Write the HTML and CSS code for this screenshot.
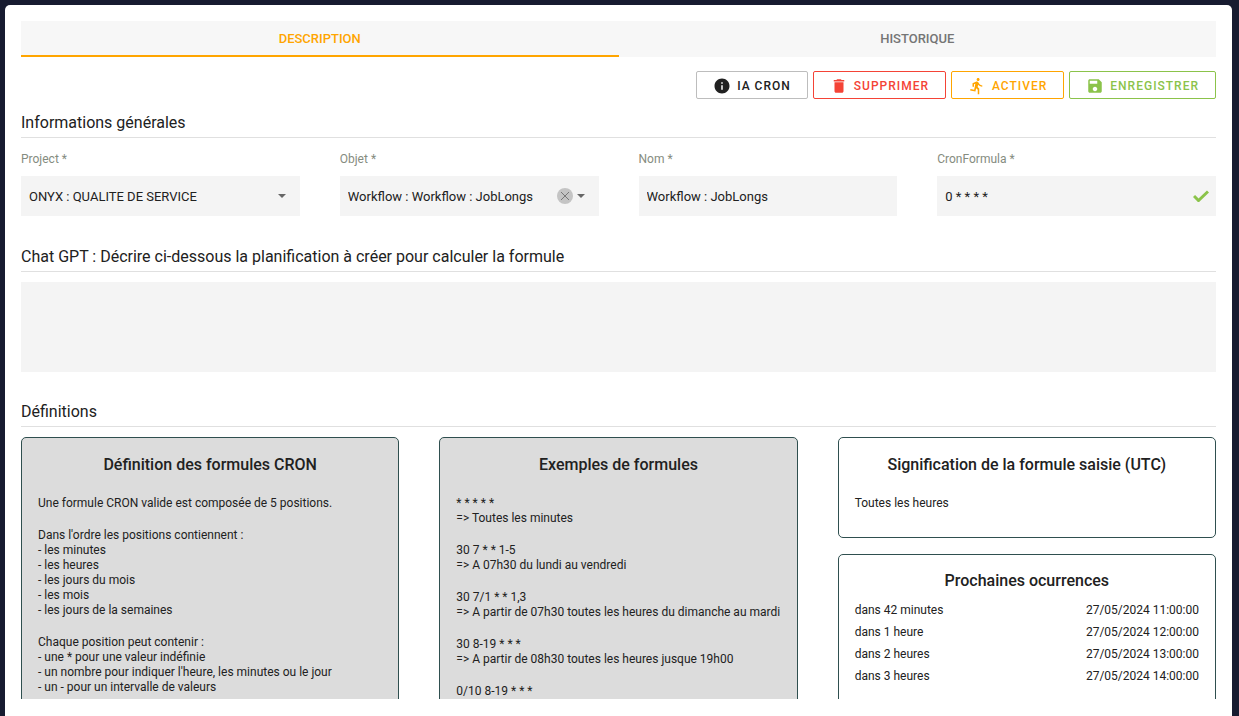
FILE: index.html
```html
<!DOCTYPE html>
<html lang="fr">
<head>
  <meta charset="UTF-8">
  <meta name="viewport" content="width=device-width, initial-scale=1.0">
  <title>Planification CRON</title>
  <link rel="stylesheet" href="styles.css">
</head>
<body>
  <main class="panel">
    <div class="tabs" role="tablist">
      <button class="tab active" role="tab" aria-selected="true">DESCRIPTION</button>
      <button class="tab" role="tab" aria-selected="false">HISTORIQUE</button>
    </div>

    <form class="content">
      <div class="actions">
        <button type="button" class="btn">
          <svg viewBox="0 0 24 24"><path d="M12 2C6.48 2 2 6.48 2 12s4.48 10 10 10 10-4.48 10-10S17.52 2 12 2zm1 15h-2v-6h2v6zm0-8h-2V7h2v2z"/></svg>
          IA CRON
        </button>
        <button type="button" class="btn danger">
          <svg viewBox="0 0 24 24"><path d="M6 19c0 1.1.9 2 2 2h8c1.1 0 2-.9 2-2V7H6v12zM19 4h-3.5l-1-1h-5l-1 1H5v2h14V4z"/></svg>
          SUPPRIMER
        </button>
        <button type="button" class="btn warning">
          <svg viewBox="0 0 24 24"><path d="M13.49 5.48c1.1 0 2-.9 2-2s-.9-2-2-2-2 .9-2 2 .9 2 2 2zm-3.6 13.9l1-4.4 2.1 2v6h2v-7.5l-2.1-2 .6-3c1.3 1.5 3.3 2.5 5.5 2.5v-2c-1.9 0-3.5-1-4.3-2.4l-1-1.6c-.4-.6-1-1-1.7-1-.3 0-.5.1-.8.1l-5.2 2.2v4.7h2v-3.4l1.8-.7-1.6 8.1-4.9-1-.4 2 7 1.4z"/></svg>
          ACTIVER
        </button>
        <button type="submit" class="btn success">
          <svg viewBox="0 0 24 24"><path d="M17 3H5c-1.11 0-2 .9-2 2v14c0 1.1.89 2 2 2h14c1.1 0 2-.9 2-2V7l-4-4zm-5 16c-1.66 0-3-1.34-3-3s1.34-3 3-3 3 1.34 3 3-1.34 3-3 3zm3-10H5V5h10v4z"/></svg>
          ENREGISTRER
        </button>
      </div>

      <h2>Informations générales</h2>
      <div class="row fields">
        <div class="col">
          <label for="project">Project *</label>
          <div class="field">
            <select id="project">
              <option>ONYX : QUALITE DE SERVICE</option>
            </select>
            <svg class="arrow" viewBox="0 0 8 4"><path d="M0 0h8L4 4z"/></svg>
          </div>
        </div>
        <div class="col">
          <label for="objet">Objet *</label>
          <div class="field">
            <select id="objet">
              <option>Workflow : Workflow : JobLongs</option>
            </select>
            <button type="button" class="clear" aria-label="Effacer">
              <svg viewBox="0 0 16 16"><path d="M4 4l8 8M12 4l-8 8"/></svg>
            </button>
            <svg class="arrow" viewBox="0 0 8 4"><path d="M0 0h8L4 4z"/></svg>
          </div>
        </div>
        <div class="col">
          <label for="nom">Nom *</label>
          <div class="field">
            <input type="text" id="nom" value="Workflow : JobLongs">
          </div>
        </div>
        <div class="col">
          <label for="formula">CronFormula *</label>
          <div class="field">
            <input type="text" id="formula" value="0 * * * *">
            <svg class="check" viewBox="0 0 16 12"><path d="M1 6l4.500 4.500L15 1.500"/></svg>
          </div>
        </div>
      </div>

      <h2><label for="prompt">Chat GPT : Décrire ci-dessous la planification à créer pour calculer la formule</label></h2>
      <textarea id="prompt" class="prompt"></textarea>

      <h2>Définitions</h2>
      <div class="row">
        <div class="col">
          <section class="card grey">
            <h3>Définition des formules CRON</h3>
            <div class="text">
              <p>Une formule CRON valide est composée de 5 positions.</p>
              <p>
                Dans l'ordre les positions contiennent :<br>
                - les minutes<br>
                - les heures<br>
                - les jours du mois<br>
                - les mois<br>
                - les jours de la semaines
              </p>
              <p>
                Chaque position peut contenir :<br>
                - une * pour une valeur indéfinie<br>
                - un nombre pour indiquer l'heure, les minutes ou le jour<br>
                - un - pour un intervalle de valeurs
              </p>
            </div>
          </section>
        </div>
        <div class="col">
          <section class="card grey">
            <h3>Exemples de formules</h3>
            <div class="text">
              <p>* * * * *<br>=&gt; Toutes les minutes</p>
              <p>30 7 * * 1-5<br>=&gt; A 07h30 du lundi au vendredi</p>
              <p>30 7/1 * * 1,3<br>=&gt; A partir de 07h30 toutes les heures du dimanche au mardi</p>
              <p>30 8-19 * * *<br>=&gt; A partir de 08h30 toutes les heures jusque 19h00</p>
              <p>0/10 8-19 * * *</p>
            </div>
          </section>
        </div>
        <div class="col">
          <section class="card">
            <h3>Signification de la formule saisie (UTC)</h3>
            <div class="text">
              <p>Toutes les heures</p>
            </div>
          </section>
          <section class="card next">
            <h3>Prochaines ocurrences</h3>
            <table class="dates">
              <tr><td>dans 42 minutes</td><td>27/05/2024 11:00:00</td></tr>
              <tr><td>dans 1 heure</td><td>27/05/2024 12:00:00</td></tr>
              <tr><td>dans 2 heures</td><td>27/05/2024 13:00:00</td></tr>
              <tr><td>dans 3 heures</td><td>27/05/2024 14:00:00</td></tr>
            </table>
          </section>
        </div>
      </div>
    </form>
  </main>
</body>
</html>
```

FILE: styles.css
```css
* {
  box-sizing: border-box;
}
body {
  margin: 0;
  height: 100vh;
  padding: 5px 7px 0 5px;
  background: #171b30;
  font-family: Roboto, "Liberation Sans", sans-serif;
  font-size: 13px;
  color: #212121;
  overflow: hidden;
}
button, input, select, textarea {
  font: inherit;
  color: inherit;
  border: none;
  background: none;
  outline: none;
}
.panel {
  height: 100%;
  padding: 16px 16px 17px;
  display: flex;
  flex-direction: column;
  background: #fff;
  border-radius: 5px 5px 0 0;
}
.tabs {
  display: flex;
  flex: none;
  height: 36px;
  background: #f7f7f7;
}
.tab {
  flex: 1;
  padding: 0;
  border-bottom: 2px solid transparent;
  font-weight: 500;
  color: #757575;
  cursor: pointer;
}
.tab.active {
  color: #ffa500;
  border-bottom-color: #ffa500;
}
.content {
  flex: 1;
  min-height: 0;
  padding-top: 14px;
  overflow: hidden;
}

/* buttons */
.actions {
  display: flex;
  justify-content: flex-end;
  gap: 5px;
  margin-bottom: 12px;
}
.btn {
  display: flex;
  align-items: center;
  gap: 6px;
  height: 28px;
  padding: 2px 16px 0;
  border: 1px solid #bdbdbd;
  border-radius: 2px;
  font-size: 12px;
  font-weight: 500;
  letter-spacing: 1px;
  cursor: pointer;
}
.btn svg {
  width: 18px;
  height: 18px;
  fill: currentColor;
}
.btn.danger {
  color: #f44336;
  border-color: #f44336;
}
.btn.warning {
  color: #ffa500;
  border-color: #ffa500;
}
.btn.success {
  color: #8bc34a;
  border-color: #8bc34a;
}

h2 {
  margin: 0 0 10px;
  padding-bottom: 2px;
  border-bottom: 1px solid #e0e0e0;
  font-size: 16px;
  font-weight: 400;
  line-height: 24px;
}

/* columns */
.row {
  display: grid;
  grid-auto-flow: column;
  grid-auto-columns: minmax(0, 1fr);
}
.col {
  padding: 0 20px;
}
.col:first-child {
  padding-left: 0;
}
.col:last-child {
  padding-right: 0;
}

/* fields */
.fields {
  padding-top: 3px;
  margin-bottom: 29px;
}
.col > label {
  display: block;
  margin-bottom: 9px;
  font-size: 12px;
  line-height: 16px;
  color: #858c80;
}
.field {
  display: flex;
  align-items: center;
  height: 40px;
  padding-right: 14px;
  background: #f4f4f4;
}
.field input, .field select {
  flex: 1;
  min-width: 0;
  height: 100%;
  padding: 0 8px;
  appearance: none;
}
.arrow {
  width: 8px;
  height: 4px;
  fill: #666;
}
.clear {
  width: 16px;
  height: 16px;
  margin-right: 4px;
  padding: 0;
  border-radius: 50%;
  background: #c4c4c4;
  cursor: pointer;
}
.clear svg {
  display: block;
  stroke: #777;
}
.check {
  width: 16px;
  height: 12px;
  margin-right: -7px;
  fill: none;
  stroke: #8bc34a;
  stroke-width: 3;
}
.prompt {
  display: block;
  width: 100%;
  height: 90px;
  margin-bottom: 28px;
  padding: 8px;
  background: #f4f4f4;
  resize: none;
}

/* cards */
.card {
  min-height: 101px;
  padding: 16px;
  border: 1px solid #2f4f4f;
  border-radius: 5px;
}
.card.grey {
  min-height: 320px;
  background: #dcdcdc;
}
.card.next {
  min-height: 200px;
  margin-top: 16px;
  padding-top: 15px;
}
h3 {
  margin: 0 0 20px;
  font-size: 16px;
  font-weight: 500;
  line-height: 22px;
  text-align: center;
}
.text {
  font-size: 12px;
  line-height: 15px;
}
.text p {
  margin: 0;
}
.text p + p {
  margin-top: 17px;
}
.next h3 {
  margin-bottom: 7px;
}
.dates {
  width: 100%;
  border-collapse: collapse;
  font-size: 12px;
}
.dates td {
  height: 22px;
  padding: 0;
}
.dates td:last-child {
  text-align: right;
}
```
